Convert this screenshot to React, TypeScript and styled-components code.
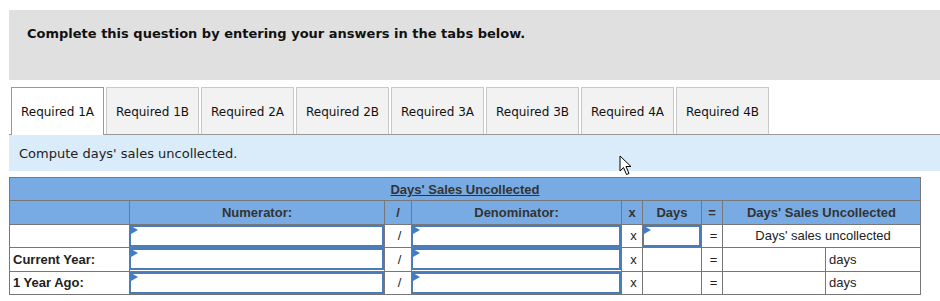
import styled, { createGlobalStyle } from 'styled-components'

const GlobalStyle = createGlobalStyle`
  body {
    margin: 0;
    background: #fff;
    font-family: 'DejaVu Sans', Verdana, sans-serif;
    color: #111;
  }
`

const TABS = [
  'Required 1A',
  'Required 1B',
  'Required 2A',
  'Required 2B',
  'Required 3A',
  'Required 3B',
  'Required 4A',
  'Required 4B',
]

const ROWS = [
  { label: '', first: true },
  { label: 'Current Year:', first: false },
  { label: '1 Year Ago:', first: false },
]

const Page = styled.div`
  position: relative;
  padding: 10px 0 0 9px;
`

const Banner = styled.div`
  background: #e0e0e0;
  height: 70px;
  padding: 16px 0 0 18px;
  box-sizing: border-box;
  font-size: 13px;
  font-weight: bold;
  color: #111;
`

const TabBar = styled.div`
  display: flex;
  align-items: flex-start;
  gap: 2px;
  margin-top: 7px;
  padding-left: 2px;
  border-bottom: 1px solid #999;
  height: 47px;
`

const Tab = styled.div<{ $active?: boolean }>`
  width: 93px;
  height: ${(p) => (p.$active ? '48px' : '47px')};
  box-sizing: border-box;
  border: 1px solid ${(p) => (p.$active ? '#999' : '#c8c8c8')};
  border-bottom: none;
  background: ${(p) => (p.$active ? '#fff' : '#f2f2f2')};
  display: flex;
  align-items: center;
  justify-content: center;
  padding-top: ${(p) => (p.$active ? '0' : '1px')};
  font-size: 12px;
  color: #111;
  position: relative;
  z-index: ${(p) => (p.$active ? 1 : 0)};
`

const Instruction = styled.div`
  background: #daebf9;
  height: 36px;
  padding: 11px 0 0 10px;
  box-sizing: border-box;
  font-size: 13px;
  color: #222;
`

const Grid = styled.table`
  margin-top: 6px;
  width: 911px;
  border-collapse: collapse;
  table-layout: fixed;
  font-family: 'Liberation Sans', Arial, sans-serif;
  font-size: 13px;
  color: #222;
  border: 1px solid #777;
`

const Head = styled.th`
  background: #78abe3;
  border: 1px solid #777;
  height: 22.4px;
  padding: 0;
  font-weight: bold;
  color: #333;
  text-align: center;
`

const Title = styled.span`
  text-decoration: underline;
`

const Cell = styled.td<{ $align?: string }>`
  border: 1px solid #777;
  height: 22.4px;
  padding: 0 0 0 3px;
  text-align: ${(p) => p.$align || 'center'};
  background: #fff;
  white-space: nowrap;
`

const LabelCell = styled(Cell)`
  font-weight: bold;
  color: #222;
`

const InputCell = styled.td`
  border: 1px solid #777;
  padding: 0;
  height: 22.4px;
  position: relative;
`

const Field = styled.div`
  height: 22px;
  box-sizing: border-box;
  border: 2px solid #4a7cb9;
  border-left-width: 1px;
  background: #fff;
`

const Flag = styled.span`
  position: absolute;
  left: 1px;
  top: 1px;
  width: 0;
  height: 0;
  border-top: 4px solid transparent;
  border-bottom: 4px solid transparent;
  border-left: 7px solid #3f7ccc;
`

const Cursor = styled.svg`
  position: absolute;
  left: 619px;
  top: 155px;
`

const Entry = () => (
  <InputCell>
    <Field />
    <Flag />
  </InputCell>
)

const App = () => {
  return (
    <Page>
      <GlobalStyle />
      <Banner>Complete this question by entering your answers in the tabs below.</Banner>
      <TabBar>
        {TABS.map((t, i) => (
          <Tab key={t} $active={i === 0}>
            {t}
          </Tab>
        ))}
      </TabBar>
      <Instruction>Compute days' sales uncollected.</Instruction>
      <Grid>
        <colgroup>
          <col style={{ width: 120 }} />
          <col style={{ width: 255 }} />
          <col style={{ width: 27 }} />
          <col style={{ width: 210 }} />
          <col style={{ width: 21 }} />
          <col style={{ width: 59 }} />
          <col style={{ width: 21 }} />
          <col style={{ width: 103 }} />
          <col style={{ width: 95 }} />
        </colgroup>
        <thead>
          <tr>
            <Head colSpan={9}>
              <Title>Days' Sales Uncollected</Title>
            </Head>
          </tr>
          <tr>
            <Head />
            <Head>Numerator:</Head>
            <Head>/</Head>
            <Head>Denominator:</Head>
            <Head>x</Head>
            <Head>Days</Head>
            <Head>=</Head>
            <Head colSpan={2}>Days' Sales Uncollected</Head>
          </tr>
        </thead>
        <tbody>
          {ROWS.map((r) => (
            <tr key={r.label || 'top'}>
              <LabelCell $align="left">{r.label}</LabelCell>
              <Entry />
              <Cell>/</Cell>
              <Entry />
              <Cell>x</Cell>
              {r.first ? <Entry /> : <Cell />}
              <Cell>=</Cell>
              {r.first ? (
                <Cell colSpan={2}>Days' sales uncollected</Cell>
              ) : (
                <>
                  <Cell />
                  <Cell $align="left">days</Cell>
                </>
              )}
            </tr>
          ))}
        </tbody>
      </Grid>
      <Cursor width="14" height="22" viewBox="0 0 14 22">
        <path
          d="M1 1 L1 16 L4.5 12.5 L7.5 19.5 L10 18.5 L7 11.5 L12 11.5 Z"
          fill="#fff"
          stroke="#000"
          strokeWidth="1"
          strokeLinejoin="miter"
        />
      </Cursor>
    </Page>
  )
}

export default App
